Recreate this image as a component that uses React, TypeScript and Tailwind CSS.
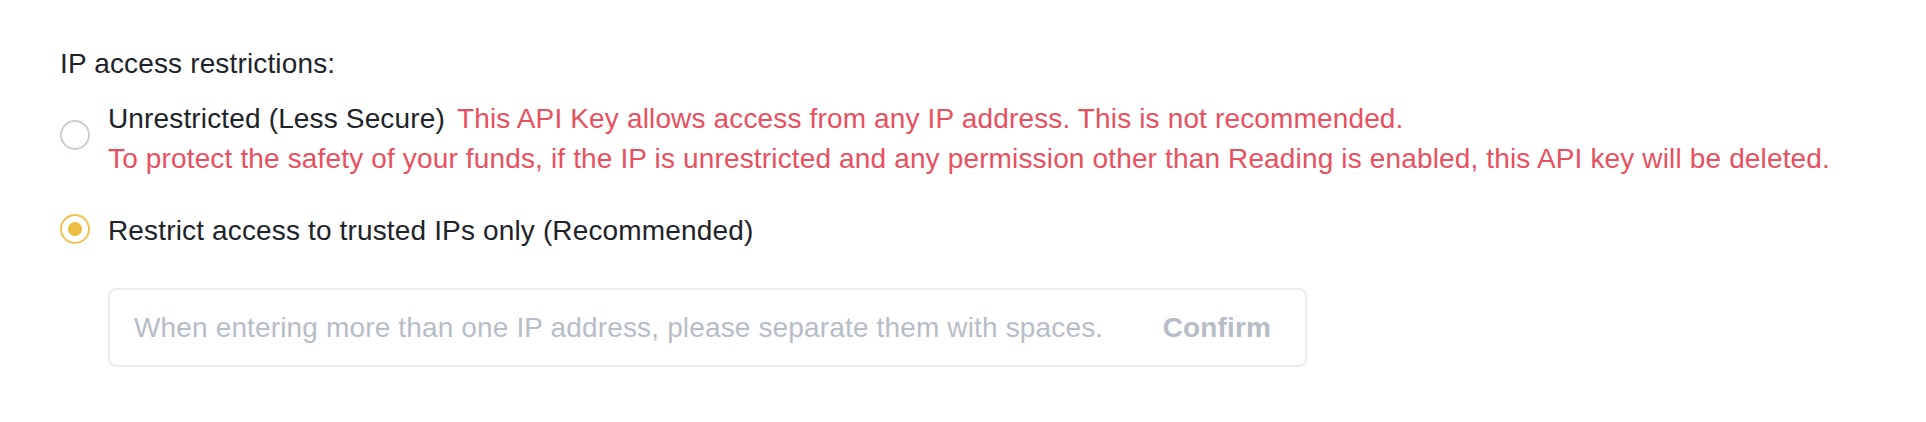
import { useState } from "react";

const font = { fontFamily: '"Liberation Sans", Arial, sans-serif' };

function Radio({ checked }: { checked: boolean }) {
  return checked ? (
    <span className="flex h-[30px] w-[30px] shrink-0 items-center justify-center rounded-full border-2 border-[#EFC24F]">
      <span className="h-[14px] w-[14px] rounded-full bg-[#EBBD42]" />
    </span>
  ) : (
    <span className="block h-[30px] w-[30px] shrink-0 rounded-full border-2 border-[#C9CDD4]" />
  );
}

export default function App() {
  const [mode, setMode] = useState<"open" | "trusted">("trusted");
  const [ips, setIps] = useState("");

  return (
    <div
      className="min-h-[422px] w-full bg-white text-[28px] leading-[40px] tracking-[0.15px] text-[#1E2329]"
      style={font}
    >
      <div className="flex flex-col pl-[60px] pt-[44px]">
        <p>IP access restrictions:</p>

        <label className="mt-[15px] flex cursor-pointer items-start gap-[18px]" onClick={() => setMode("open")}>
          <span className="mt-[21px]">
            <Radio checked={mode === "open"} />
          </span>
          <div className="whitespace-nowrap">
            <div>
              Unrestricted (Less Secure)
              <span className="ml-[12px] text-[#E8505F]">
                This API Key allows access from any IP address. This is not recommended.
              </span>
            </div>
            <div className="text-[#E8505F]">
              To protect the safety of your funds, if the IP is unrestricted and any permission other than Reading is
              enabled, this API key will be deleted.
            </div>
          </div>
        </label>

        <label className="mt-[32px] flex cursor-pointer items-start gap-[18px]" onClick={() => setMode("trusted")}>
          <span className="mt-[3px]">
            <Radio checked={mode === "trusted"} />
          </span>
          <span>Restrict access to trusted IPs only (Recommended)</span>
        </label>

        <div className="ml-[48px] mt-[37px] flex h-[79px] w-[1199px] items-center rounded-[8px] border-2 border-[#EAECEF] pl-[24px] pr-[34px]">
          <input
            value={ips}
            onChange={(e) => setIps(e.target.value)}
            placeholder="When entering more than one IP address, please separate them with spaces."
            className="min-w-0 flex-1 bg-transparent text-[28px] tracking-[0.15px] text-[#1E2329] outline-none placeholder:text-[#B7BDC6]"
            style={font}
          />
          <button className="font-bold text-[#B7BDC6]" style={font}>
            Confirm
          </button>
        </div>
      </div>
    </div>
  );
}
